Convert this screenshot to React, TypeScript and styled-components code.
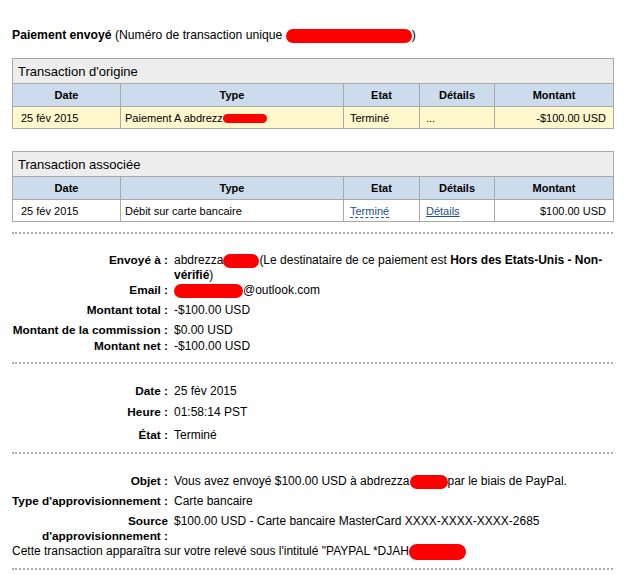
import React, { FC } from 'react';
import styled, { createGlobalStyle } from 'styled-components';

const GlobalStyle = createGlobalStyle`
  body {
    margin: 0;
    background: #fff;
    color: #000;
    font-family: "Liberation Sans", Arial, sans-serif;
  }
`;

const colours = {
  Border: '#a9a9a9',
  Caption: '#ededed',
  Head: '#cddcec',
  Yellow: '#fff8cc',
  Link: '#1d4f8b',
  Dots: '#aaaaaa',
  Redact: '#ff0000',
};

const Page = styled.div`
  width: 601px;
  padding: 28px 11px 0 12px;
`;

const Title = styled.p`
  margin: 0 0 15px;
  font-size: 12.2px;
  line-height: 15px;
`;

const Redact = styled.span<{ w: number; h?: number }>`
  display: inline-block;
  width: ${(p) => p.w}px;
  height: ${(p) => p.h ?? 14}px;
  background: ${colours.Redact};
  border-radius: ${(p) => (p.h ?? 14) / 2}px;
  vertical-align: middle;
`;

const TxTable = styled.table<{ after: number }>`
  width: 100%;
  table-layout: fixed;
  border-collapse: collapse;
  border: 1px solid ${colours.Border};
  margin-bottom: ${(p) => p.after}px;
  font-size: 11px;
`;

const Col = styled.col<{ w: number }>`
  width: ${(p) => p.w}px;
`;

const CaptionCell = styled.th`
  height: 24px;
  padding: 0 5px;
  background: ${colours.Caption};
  border: 1px solid ${colours.Border};
  font-size: 13px;
  font-weight: normal;
  text-align: left;
`;

const HeadCell = styled.th`
  height: 22px;
  padding: 0;
  background: ${colours.Head};
  border: 1px solid ${colours.Border};
  font-weight: bold;
  text-align: center;
`;

const Cell = styled.td<{ bg: string; pad: number; align?: string }>`
  height: 21px;
  padding: 0 7px 0 ${(p) => p.pad}px;
  background: ${(p) => p.bg};
  border: 1px solid ${colours.Border};
  text-align: ${(p) => p.align ?? 'left'};
  white-space: nowrap;
`;

const Link = styled.a`
  color: ${colours.Link};
  text-decoration: underline;
`;

const HelpLink = styled.a`
  color: ${colours.Link};
  text-decoration: none;
  border-bottom: 1px dashed ${colours.Link};
`;

const Divider = styled.hr`
  margin: 0;
  border: 0;
  border-top: 2px dotted ${colours.Dots};
`;

const Section = styled.div<{ top: number; bottom: number }>`
  padding: ${(p) => p.top}px 0 ${(p) => p.bottom}px;
  font-size: 12px;
  line-height: 15px;
`;

const Row = styled.div<{ after?: number }>`
  display: flex;
  align-items: baseline;
  margin-bottom: ${(p) => p.after ?? 0}px;
`;

const Label = styled.div`
  flex: none;
  width: 156px;
  text-align: right;
  font-weight: bold;
  font-size: 11.8px;
`;

const Value = styled.div`
  flex: 1;
  margin-left: 6px;
`;

const Note = styled.div``;

interface ITx {
  date: string;
  type: React.ReactNode;
  state: React.ReactNode;
  details: React.ReactNode;
  amount: string;
}

const columns = [
  { title: 'Date', w: 108 },
  { title: 'Type', w: 223 },
  { title: 'Etat', w: 76 },
  { title: 'Détails', w: 75 },
  { title: 'Montant', w: 119 },
];

const Transaction: FC<{ caption: string; bg: string; after: number; tx: ITx }> = ({ caption, bg, after, tx }) => (
  <TxTable after={after}>
    <colgroup>
      {columns.map((c) => (
        <Col key={c.title} w={c.w} />
      ))}
    </colgroup>
    <thead>
      <tr>
        <CaptionCell colSpan={5}>{caption}</CaptionCell>
      </tr>
      <tr>
        {columns.map((c) => (
          <HeadCell key={c.title}>{c.title}</HeadCell>
        ))}
      </tr>
    </thead>
    <tbody>
      <tr>
        <Cell bg={bg} pad={8}>{tx.date}</Cell>
        <Cell bg={bg} pad={4}>{tx.type}</Cell>
        <Cell bg={bg} pad={6}>{tx.state}</Cell>
        <Cell bg={bg} pad={6}>{tx.details}</Cell>
        <Cell bg={bg} pad={6} align="right">{tx.amount}</Cell>
      </tr>
    </tbody>
  </TxTable>
);

const App: FC = () => {
  return (
    <Page>
      <GlobalStyle />
      <Title>
        <b>Paiement envoyé</b> (Numéro de transaction unique <Redact w={126} />)
      </Title>

      <Transaction
        caption="Transaction d'origine"
        bg={colours.Yellow}
        after={22}
        tx={{
          date: '25 fév 2015',
          type: <>Paiement A abdrezz<Redact w={44} h={9} /></>,
          state: 'Terminé',
          details: '...',
          amount: '-$100.00 USD',
        }}
      />

      <Transaction
        caption="Transaction associée"
        bg="#fff"
        after={10}
        tx={{
          date: '25 fév 2015',
          type: 'Débit sur carte bancaire',
          state: <HelpLink href="#">Terminé</HelpLink>,
          details: <Link href="#">Détails</Link>,
          amount: '$100.00 USD',
        }}
      />

      <Divider />

      <Section top={19} bottom={8}>
        <Row>
          <Label>Envoyé à :</Label>
          <Value>
            abdrezza<Redact w={36} />(Le destinataire de ce paiement est <b>Hors des Etats-Unis - Non-vérifié</b>)
          </Value>
        </Row>
        <Row after={5}>
          <Label>Email :</Label>
          <Value><Redact w={69} />@outlook.com</Value>
        </Row>
        <Row after={5}>
          <Label>Montant total :</Label>
          <Value>-$100.00 USD</Value>
        </Row>
        <Row after={1}>
          <Label>Montant de la commission :</Label>
          <Value>$0.00 USD</Value>
        </Row>
        <Row>
          <Label>Montant net :</Label>
          <Value>-$100.00 USD</Value>
        </Row>
      </Section>

      <Divider />

      <Section top={20} bottom={9}>
        <Row after={6}>
          <Label>Date :</Label>
          <Value>25 fév 2015</Value>
        </Row>
        <Row after={8}>
          <Label>Heure :</Label>
          <Value>01:58:14 PST</Value>
        </Row>
        <Row>
          <Label>État :</Label>
          <Value>Terminé</Value>
        </Row>
      </Section>

      <Divider />

      <Section top={20} bottom={8}>
        <Row after={5}>
          <Label>Objet :</Label>
          <Value>Vous avez envoyé $100.00 USD à abdrezza<Redact w={38} />par le biais de PayPal.</Value>
        </Row>
        <Row after={5}>
          <Label>Type d'approvisionnement :</Label>
          <Value>Carte bancaire</Value>
        </Row>
        <Row>
          <Label>Source d'approvisionnement :</Label>
          <Value>$100.00 USD - Carte bancaire MasterCard XXXX-XXXX-XXXX-2685</Value>
        </Row>
        <Note>
          Cette transaction apparaîtra sur votre relevé sous l'intitulé "PAYPAL *DJAH<Redact w={57} h={16} />
        </Note>
      </Section>

      <Divider />
    </Page>
  );
};

export default App;
